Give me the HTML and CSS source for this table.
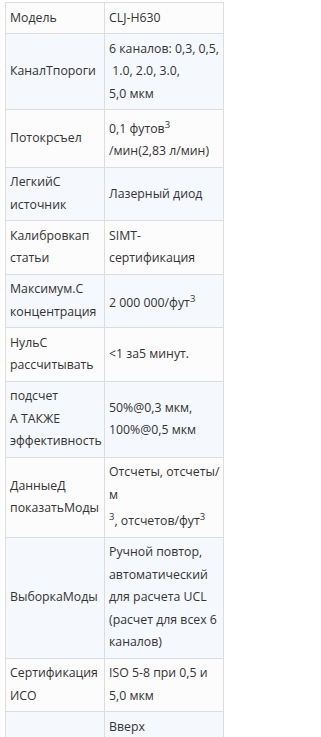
FILE: index.html
```html
<!DOCTYPE html>
<html lang="ru">
<head>
<meta charset="utf-8">
<link rel="stylesheet" href="styles.css">
</head>
<body>
<table class="spec">
<tbody>
<tr><td class="k">Модель</td><td class="v">CLJ-H630</td></tr>
<tr><td class="k">КаналТпороги</td><td class="v">6 каналов: 0,3, 0,5,<br>&nbsp;1.0, 2.0, 3.0,<br>5,0 мкм</td></tr>
<tr><td class="k">Потокрсъел</td><td class="v">0,1 футов<sup>3</sup><br>/мин(2,83 л/мин)</td></tr>
<tr><td class="k">ЛегкийС<br>источник</td><td class="v">Лазерный диод</td></tr>
<tr><td class="k">Калибровкап<br>статьи</td><td class="v">SIMT-<br>сертификация</td></tr>
<tr><td class="k">Максимум.С<br>концентрация</td><td class="v">2 000 000/фут<sup>3</sup></td></tr>
<tr><td class="k">НульС<br>рассчитывать</td><td class="v">&lt;1 за5 минут.</td></tr>
<tr><td class="k">подсчет<br>А ТАКЖЕ<br>эффективность</td><td class="v">50%@0,3 мкм,<br>100%@0,5 мкм</td></tr>
<tr><td class="k">ДанныеД<br>показатьМоды</td><td class="v">Отсчеты, отсчеты/<br>м<br><sup>3</sup>, отсчетов/фут<sup>3</sup></td></tr>
<tr><td class="k">ВыборкаМоды</td><td class="v">Ручной повтор,<br>автоматический<br>для расчета UCL<br>(расчет для всех 6<br>каналов)</td></tr>
<tr><td class="k">Сертификация<br>ИСО</td><td class="v">ISO 5-8 при 0,5 и<br>5,0 мкм</td></tr>
<tr><td class="k">Хранение<br>данных</td><td class="v">Вверх<br>до 10 000<br>записей,<br>экспорт<br>через USB</td></tr>
</tbody>
</table>
</body>
</html>
```
FILE: styles.css
```css
html, body {
  margin: 0;
  padding: 0;
  background: #ffffff;
}
body {
  font-family: "Open Sans", "Noto Sans", sans-serif;
  font-size: 12.3px;
  color: #333333;
}
.spec {
  border-collapse: collapse;
  table-layout: fixed;
  margin: 2px 0 0 5px;
  width: 219px;
}
.spec td {
  border: 1px solid #dddddd;
  padding: 3.75px 4px;
  line-height: 22.5px;
  vertical-align: middle;
  white-space: nowrap;
}
.spec td.k {
  width: 90px;
}
.spec tr:nth-child(odd) td {
  background: #fcfcfc;
}
.spec tr:nth-child(even) td {
  background: #f5f8fd;
}
.spec sup {
  font-size: 9.5px;
  vertical-align: super;
}
```
